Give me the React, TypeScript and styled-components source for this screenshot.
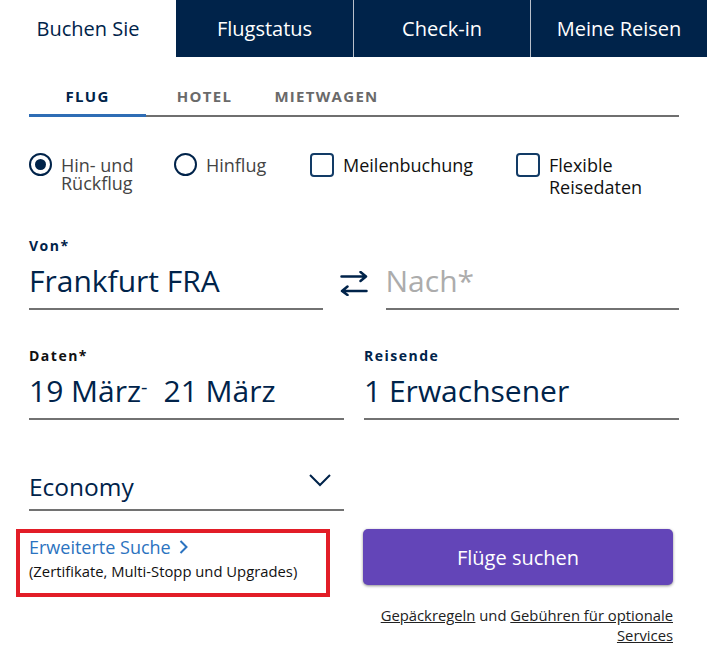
import React from "react";
import styled, { createGlobalStyle } from "styled-components";

const NAVY = "#00234a";

const GlobalStyle = createGlobalStyle`
  html, body {
    margin: 0;
    padding: 0;
    background: #fff;
  }
  body {
    font-family: "Open Sans", "Noto Sans", sans-serif;
  }
  * {
    box-sizing: border-box;
  }
`;

const Page = styled.div`
  width: 707px;
  min-height: 664px;
  background: #fff;
`;

const TopTabs = styled.nav`
  display: grid;
  grid-template-columns: 176px 177px 177px 177px;
  height: 57px;
`;

const TopTab = styled.div<{ $active?: boolean; $divider?: boolean }>`
  display: flex;
  align-items: center;
  justify-content: center;
  font-size: 20px;
  background: ${(p) => (p.$active ? "#fff" : NAVY)};
  color: ${(p) => (p.$active ? NAVY : "#fff")};
  border-left: ${(p) => (p.$divider ? "1px solid #b9c0cb" : "none")};
`;

const Body = styled.div`
  padding: 0 28px 0 29px;
`;

const SubTabs = styled.div`
  display: flex;
  margin-top: 20px;
  border-bottom: 2px solid #6f6f6f;
`;

const SubTab = styled.div<{ $active?: boolean; $width: number }>`
  width: ${(p) => p.$width}px;
  height: 40px;
  display: flex;
  align-items: center;
  justify-content: center;
  font-size: 15px;
  font-weight: 700;
  letter-spacing: 1.3px;
  color: ${(p) => (p.$active ? NAVY : "#6a6a6a")};
  border-bottom: 3px solid ${(p) => (p.$active ? "#2f6db5" : "transparent")};
  margin-bottom: -2px;
`;

const Options = styled.div`
  display: flex;
  margin-top: 36px;
`;

const Option = styled.label<{ $width?: number }>`
  display: flex;
  align-items: flex-start;
  gap: 9px;
  width: ${(p) => (p.$width ? `${p.$width}px` : "auto")};
  flex: ${(p) => (p.$width ? "none" : "1")};
`;

const Radio = styled.span<{ $checked?: boolean }>`
  flex: none;
  width: 23px;
  height: 23px;
  border: 2px solid ${NAVY};
  border-radius: 50%;
  display: flex;
  align-items: center;
  justify-content: center;

  &::after {
    content: "";
    width: 11px;
    height: 11px;
    border-radius: 50%;
    background: ${(p) => (p.$checked ? NAVY : "transparent")};
  }
`;

const Checkbox = styled.span`
  flex: none;
  width: 24px;
  height: 24px;
  border: 2px solid #123b66;
  border-radius: 4px;
`;

const OptionText = styled.span<{ $lh: number; $dark?: boolean }>`
  font-size: 18px;
  line-height: ${(p) => p.$lh}px;
  padding-top: ${(p) => (p.$lh < 20 ? 3 : 1)}px;
  color: ${(p) => (p.$dark ? "#111" : "#444")};
`;

const RouteRow = styled.div`
  display: flex;
  margin-top: 39px;
`;

const Field = styled.div`
  flex: 1;
  padding-bottom: 7px;
  border-bottom: 2px solid #727272;
`;

const FieldLabel = styled.div<{ $dark?: boolean }>`
  height: 18px;
  font-size: 14px;
  line-height: 18px;
  font-weight: 700;
  letter-spacing: 1.5px;
  color: ${(p) => (p.$dark ? "#111" : NAVY)};
  margin-bottom: 6px;
`;

const FieldValue = styled.div<{ $placeholder?: boolean; $size?: number }>`
  height: 40px;
  font-size: ${(p) => p.$size ?? 30}px;
  line-height: 40px;
  color: ${(p) => (p.$placeholder ? "#acacac" : NAVY)};
  white-space: nowrap;
`;

const DateDash = styled.span`
  position: relative;
  top: -8px;
  font-size: 20px;
  line-height: 0;
  margin-right: 16px;
`;

const SwapBox = styled.div`
  flex: none;
  width: 63px;
  display: flex;
  justify-content: center;
  align-self: flex-end;
  margin-bottom: 14px;
`;

const Grid = styled.div<{ $top: number }>`
  display: grid;
  grid-template-columns: 315px 315px;
  column-gap: 20px;
  align-items: start;
  margin-top: ${(p) => p.$top}px;
`;

const CabinField = styled.div`
  display: flex;
  align-items: flex-start;
  justify-content: space-between;
  padding: 0 13px 2px 0;
  border-bottom: 2px solid #727272;
`;

const ChevronSvg = styled.svg`
  margin-top: 7px;
`;

const AdvancedBox = styled.div`
  width: 314px;
  margin-left: -13px;
  border: 4px solid #e21d27;
  padding: 2px 9px 12px;
`;

const AdvancedLink = styled.a`
  display: flex;
  align-items: center;
  gap: 8px;
  font-size: 18px;
  line-height: 24px;
  color: #2b73c0;
  text-decoration: none;
`;

const AdvancedNote = styled.div`
  margin-top: 2px;
  font-size: 14.8px;
  line-height: 20px;
  color: #111;
`;

const RightCol = styled.div`
  width: 310px;
  margin-left: -1px;
`;

const SearchButton = styled.button`
  width: 310px;
  height: 56px;
  border: none;
  border-radius: 5px;
  background: #6345b8;
  box-shadow: 0 1px 3px rgba(0, 0, 0, 0.45);
  color: #fff;
  font-family: inherit;
  font-size: 20px;
`;

const Footnote = styled.p`
  margin: 20px 0 0;
  font-size: 14.8px;
  line-height: 20px;
  text-align: right;
  color: #222;

  a {
    color: #222;
    text-decoration: underline;
  }
`;

const SwapIcon = () => (
  <svg width="28" height="25" viewBox="0 0 28 25" fill="none" stroke={NAVY} strokeWidth="2.5" strokeLinecap="round" strokeLinejoin="round">
    <path d="M1.5 5.5H26M20.5 1L26 5.5L20.5 10" />
    <path d="M26.5 20H2M7.5 15.5L2 20L7.5 24" />
  </svg>
);

const Chevron = () => (
  <ChevronSvg width="22" height="13" viewBox="0 0 22 13" fill="none" stroke={NAVY} strokeWidth="2">
    <polyline points="1,1 11,11 21,1" />
  </ChevronSvg>
);

const LinkArrow = () => (
  <svg width="9" height="14" viewBox="0 0 9 14" fill="none" stroke="#2b73c0" strokeWidth="2">
    <polyline points="1.5,1 7.5,7 1.5,13" />
  </svg>
);

export default function App() {
  return (
    <Page>
      <GlobalStyle />
      <TopTabs>
        <TopTab $active>Buchen Sie</TopTab>
        <TopTab>Flugstatus</TopTab>
        <TopTab $divider>Check-in</TopTab>
        <TopTab $divider>Meine Reisen</TopTab>
      </TopTabs>

      <Body>
        <SubTabs>
          <SubTab $active $width={117}>FLUG</SubTab>
          <SubTab $width={117}>HOTEL</SubTab>
          <SubTab $width={127}>MIETWAGEN</SubTab>
        </SubTabs>

        <Options>
          <Option $width={145}>
            <Radio $checked />
            <OptionText $lh={18}>Hin- und Rückflug</OptionText>
          </Option>
          <Option $width={136}>
            <Radio />
            <OptionText $lh={22}>Hinflug</OptionText>
          </Option>
          <Option $width={206}>
            <Checkbox />
            <OptionText $lh={22} $dark>Meilenbuchung</OptionText>
          </Option>
          <Option>
            <Checkbox />
            <OptionText $lh={22} $dark>Flexible Reisedaten</OptionText>
          </Option>
        </Options>

        <RouteRow>
          <Field>
            <FieldLabel>Von*</FieldLabel>
            <FieldValue>Frankfurt FRA</FieldValue>
          </Field>
          <SwapBox>
            <SwapIcon />
          </SwapBox>
          <Field>
            <FieldLabel />
            <FieldValue $placeholder>Nach*</FieldValue>
          </Field>
        </RouteRow>

        <Grid $top={37}>
          <Field>
            <FieldLabel $dark>Daten*</FieldLabel>
            <FieldValue>
              19 März<DateDash>-</DateDash>21 März
            </FieldValue>
          </Field>
          <Field>
            <FieldLabel>Reisende</FieldLabel>
            <FieldValue>1 Erwachsener</FieldValue>
          </Field>
        </Grid>

        <Grid $top={47}>
          <CabinField>
            <FieldValue $size={24.5}>Economy</FieldValue>
            <Chevron />
          </CabinField>
        </Grid>

        <Grid $top={18}>
          <AdvancedBox>
            <AdvancedLink href="#">
              Erweiterte Suche <LinkArrow />
            </AdvancedLink>
            <AdvancedNote>(Zertifikate, Multi-Stopp und Upgrades)</AdvancedNote>
          </AdvancedBox>
          <RightCol>
            <SearchButton>Flüge suchen</SearchButton>
            <Footnote>
              <a href="#">Gepäckregeln</a> und <a href="#">Gebühren für optionale Services</a>
            </Footnote>
          </RightCol>
        </Grid>
      </Body>
    </Page>
  );
}
